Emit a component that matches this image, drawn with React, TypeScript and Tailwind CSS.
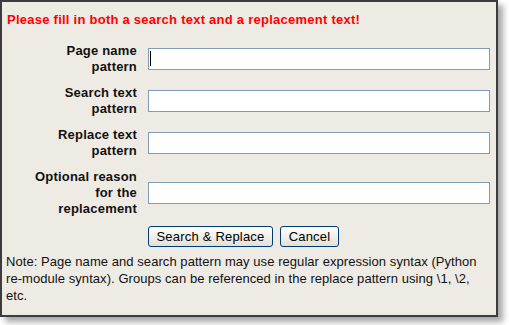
import React from "react";

const rows: { label: string[]; caret?: boolean }[] = [
  { label: ["Page name", "pattern"], caret: true },
  { label: ["Search text", "pattern"] },
  { label: ["Replace text", "pattern"] },
  { label: ["Optional reason", "for the", "replacement"] },
];

const note = [
  "Note: Page name and search pattern may use regular expression syntax (Python",
  "re-module syntax). Groups can be referenced in the replace pattern using \\1, \\2,",
  "etc.",
];

export default function App() {
  return (
    <div className="w-[509px] h-[325px] bg-white" style={{ fontFamily: '"Liberation Sans", Arial, sans-serif' }}>
      <div className="w-[498px] h-[317px] border-2 border-[#3c3c3c] bg-[#eeebe5] shadow-[5px_5px_6px_rgba(0,0,0,0.35)] px-[3px] text-black">
        <div className="pt-[10px] pl-[2px] text-[13px] leading-[16px] font-bold tracking-[0.25px] text-[#ff0000] whitespace-nowrap">
          Please fill in both a search text and a replacement text!
        </div>

        <div className="mt-[15px] grid grid-cols-[132px_342px] gap-x-[11px] gap-y-[10px] items-center">
          {rows.map((r, i) => (
            <React.Fragment key={i}>
              <div className="text-right text-[13px] leading-[16px] font-bold tracking-[0.2px] text-[#111]">
                {r.label.map(l => (
                  <div key={l}>{l}</div>
                ))}
              </div>
              <div className="relative">
                <input type="text" className="w-[342px] h-[22px] border border-[#7f9db9] bg-white outline-none block" />
                {r.caret && <span className="absolute left-[2px] top-[3px] w-px h-[15px] bg-black" />}
              </div>
            </React.Fragment>
          ))}
        </div>

        <div className="mt-[9px] pl-[143px] flex gap-[7px]">
          <button className="w-[125px] h-[21px] border border-[#003c74] rounded-[3px] bg-gradient-to-b from-white to-[#e3e0d6] text-[13px] leading-none tracking-[0.2px] text-black">
            Search &amp; Replace
          </button>
          <button className="w-[59px] h-[21px] border border-[#003c74] rounded-[3px] bg-gradient-to-b from-white to-[#e3e0d6] text-[13px] leading-none tracking-[0.2px] text-black">
            Cancel
          </button>
        </div>

        <div className="mt-[6px] pl-[1px] text-[13px] leading-[17px] tracking-[0.06px] text-[#111]">
          {note.map(l => (
            <div key={l} className="whitespace-nowrap">{l}</div>
          ))}
        </div>
      </div>
    </div>
  );
}
